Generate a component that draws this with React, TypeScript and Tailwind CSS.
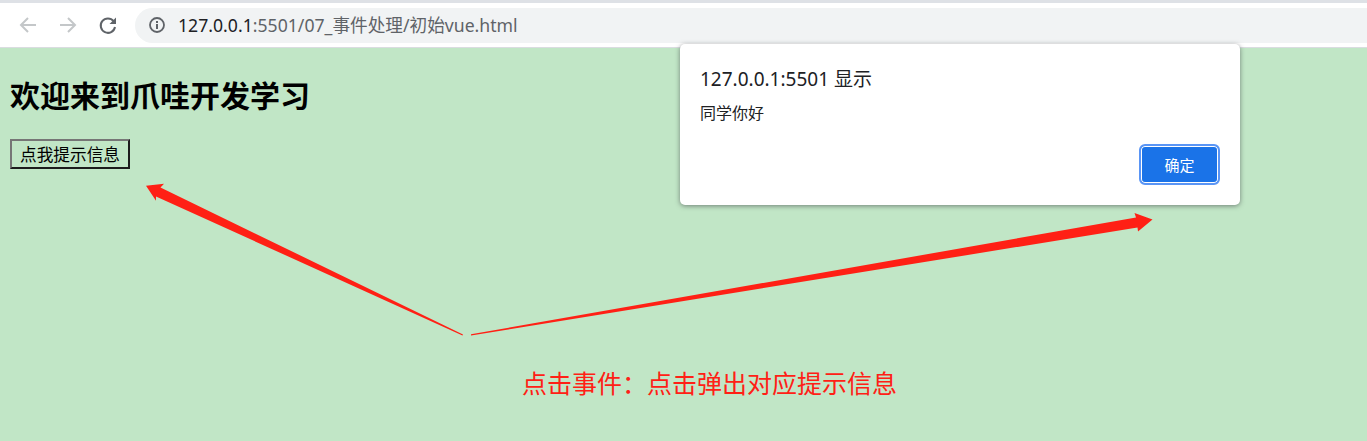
import React from "react";

const cjk = "font-['Noto_Sans','Noto_Sans_CJK_SC',sans-serif]";

function Back() {
  return (
    <svg width="20" height="20" viewBox="0 0 20 20" fill="none" stroke="#c4c7c9" strokeWidth="2">
      <path d="M18 10H3M10 3l-7 7 7 7" />
    </svg>
  );
}

function Forward() {
  return (
    <svg width="20" height="20" viewBox="0 0 20 20" fill="none" stroke="#c4c7c9" strokeWidth="2">
      <path d="M2 10h15M10 3l7 7-7 7" />
    </svg>
  );
}

function Reload() {
  return (
    <svg width="20" height="20" viewBox="0 0 20 20" fill="none">
      <path d="M15.6 6.200A7.200 7.200 0 1 0 17 12" stroke="#5f6368" strokeWidth="2" />
      <path d="M18 2.500V9h-6.500z" fill="#5f6368" />
    </svg>
  );
}

function Info() {
  return (
    <svg width="18" height="18" viewBox="0 0 18 18" fill="none">
      <circle cx="9" cy="9" r="7" stroke="#5f6368" strokeWidth="1.800" />
      <rect x="8" y="8" width="2" height="5" fill="#5f6368" />
      <rect x="8" y="5" width="2" height="2" fill="#5f6368" />
    </svg>
  );
}

export default function App() {
  return (
    <div className={`relative h-[441px] w-[1367px] overflow-hidden bg-[#c1e6c6] ${cjk}`}>
      <div className="h-[3px] bg-[#dee1e6]" />
      <div className="flex h-[45px] items-center border-b border-[#dadce0] bg-white pl-[18px]">
        <Back />
        <div className="ml-5"><Forward /></div>
        <div className="ml-5"><Reload /></div>
        <div className="ml-[17px] flex h-[35px] flex-1 items-center rounded-l-[18px] bg-[#f1f3f4] pl-[13px]">
          <Info />
          <div className="ml-[12px] whitespace-nowrap pt-[2px] text-[17.650px] leading-none text-[#5f6368]">
            <span className="text-[#202124]">127.0.0.1</span>:5501/07_事件处理/初始vue.html
          </div>
        </div>
      </div>

      <main className="px-[10px]">
        <h1 className="mt-[28px] text-[30px] leading-[40px] font-bold text-black">欢迎来到爪哇开发学习</h1>
        <button className="mt-[23px] flex h-[30px] w-[120px] items-center justify-center border-2 border-t-[#767676] border-r-[#1c1c1c] border-b-[#1c1c1c] border-l-[#767676] pt-[2px] text-[16.670px] leading-none text-black">
          点我提示信息
        </button>
      </main>

      <svg className="absolute inset-0" width="1367" height="441" viewBox="0 0 1367 441">
        <polygon fill="#ff2015" points="146,185.700 164,183.700 160.500,187.500 463,334.500 462.500,335.500 156,196.500 156,200.700" />
        <polygon fill="#ff2015" points="471,334.300 1136,217.500 1134.500,213 1152.500,219.500 1138,231.500 1137.500,227.500 471,335.500" />
      </svg>

      <div className="absolute top-[365px] left-[522px] text-[25px] leading-[36px] whitespace-nowrap text-[#ff2015]">
        点击事件：点击弹出对应提示信息
      </div>

      <div className="absolute top-[44px] left-[680px] h-[161px] w-[560px] rounded-[5px] bg-white pt-[22px] pr-[20px] pl-[20px] shadow-[0_1px_5px_rgba(60,64,67,0.6)]">
        <div className="text-[19px] leading-[26px] text-[#202124]">127.0.0.1:5501 显示</div>
        <div className="mt-[11px] text-[16px] leading-[20px] text-[#202124]">同学你好</div>
        <div className="mt-[21px] flex justify-end">
          <button className="flex h-[41px] w-[81px] items-center justify-center rounded-[6px] border-2 border-[#5a95f5] bg-[#1a73e8] pt-[2px] text-[15px] leading-none text-white shadow-[inset_0_0_0_1px_#ffffff]">
            确定
          </button>
        </div>
      </div>
    </div>
  );
}
